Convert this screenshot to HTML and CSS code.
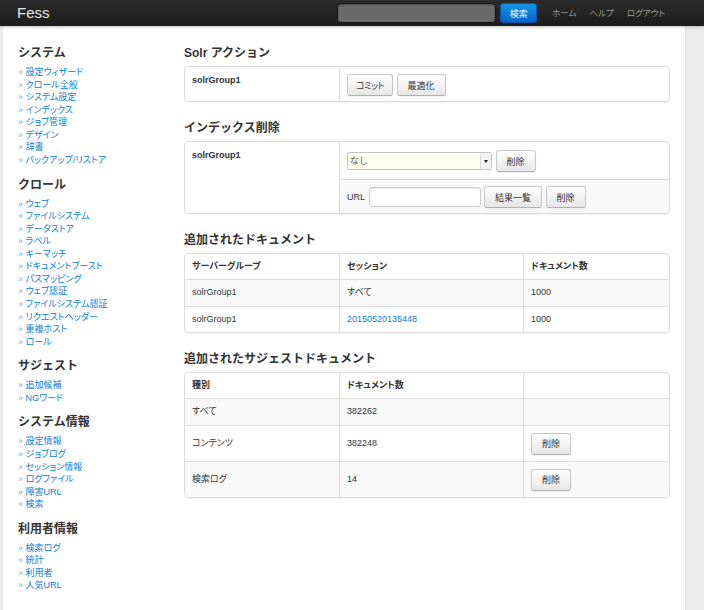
FILE: index.html
```html
<!DOCTYPE html>
<html lang="ja">
  <head>
    <meta charset="utf-8" />
    <title>Fess 管理</title>
    <link rel="stylesheet" href="styles.css">
  </head>
  <body>

    <div class="navbar">
      <a class="brand" href="#">Fess</a>
      <form class="nav-search">
        <input type="text" class="search-query">
        <button type="button" class="btn-search">検索</button>
      </form>
      <ul class="nav">
        <li><a href="#">ホーム</a></li>
        <li><a href="#">ヘルプ</a></li>
        <li><a href="#">ログアウト</a></li>
      </ul>
    </div>

    <div class="page">
      <div class="sidebar">
        <h3>システム</h3>
        <ul class="side-links">
          <li><a href="#">設定ウィザード</a></li>
          <li><a href="#">クロール全般</a></li>
          <li><a href="#">システム設定</a></li>
          <li><a href="#">インデックス</a></li>
          <li><a href="#">ジョブ管理</a></li>
          <li><a href="#">デザイン</a></li>
          <li><a href="#">辞書</a></li>
          <li><a href="#">バックアップ/リストア</a></li>
        </ul>

        <h3>クロール</h3>
        <ul class="side-links">
          <li><a href="#">ウェブ</a></li>
          <li><a href="#">ファイルシステム</a></li>
          <li><a href="#">データストア</a></li>
          <li><a href="#">ラベル</a></li>
          <li><a href="#">キーマッチ</a></li>
          <li><a href="#">ドキュメントブースト</a></li>
          <li><a href="#">パスマッピング</a></li>
          <li><a href="#">ウェブ認証</a></li>
          <li><a href="#">ファイルシステム認証</a></li>
          <li><a href="#">リクエストヘッダー</a></li>
          <li><a href="#">重複ホスト</a></li>
          <li><a href="#">ロール</a></li>
        </ul>

        <h3>サジェスト</h3>
        <ul class="side-links">
          <li><a href="#">追加候補</a></li>
          <li><a href="#">NGワード</a></li>
        </ul>

        <h3>システム情報</h3>
        <ul class="side-links">
          <li><a href="#">設定情報</a></li>
          <li><a href="#">ジョブログ</a></li>
          <li><a href="#">セッション情報</a></li>
          <li><a href="#">ログファイル</a></li>
          <li><a href="#">障害URL</a></li>
          <li><a href="#">検索</a></li>
        </ul>

        <h3>利用者情報</h3>
        <ul class="side-links">
          <li><a href="#">検索ログ</a></li>
          <li><a href="#">統計</a></li>
          <li><a href="#">利用者</a></li>
          <li><a href="#">人気URL</a></li>
        </ul>
      </div>

      <div class="main">
        <h3>Solr アクション</h3>
        <table class="box">
          <colgroup><col class="col-group"><col></colgroup>
          <tr>
            <th class="group-cell">solrGroup1</th>
            <td class="action-cell">
              <button type="button" class="btn btn-kana">コミット</button>
              <button type="button" class="btn">最適化</button>
            </td>
          </tr>
        </table>

        <h3>インデックス削除</h3>
        <table class="box">
          <colgroup><col class="col-group"><col></colgroup>
          <tr>
            <th class="group-cell" rowspan="2">solrGroup1</th>
            <td class="action-cell select-row">
              <span class="select-wrap">
                <select class="select">
                  <option>なし</option>
                </select>
              </span>
              <button type="button" class="btn">削除</button>
            </td>
          </tr>
          <tr>
            <td class="action-cell url-row">
              <label class="url-label">URL</label>
              <input type="text" class="url-input">
              <button type="button" class="btn">結果一覧</button>
              <button type="button" class="btn">削除</button>
            </td>
          </tr>
        </table>

        <h3>追加されたドキュメント</h3>
        <table class="box grid">
          <colgroup><col class="col-group"><col class="col-mid"><col></colgroup>
          <thead>
            <tr><th>サーバーグループ</th><th>セッション</th><th>ドキュメント数</th></tr>
          </thead>
          <tbody>
            <tr><td>solrGroup1</td><td>すべて</td><td>1000</td></tr>
            <tr><td>solrGroup1</td><td><a href="#">20150520135448</a></td><td>1000</td></tr>
          </tbody>
        </table>

        <h3>追加されたサジェストドキュメント</h3>
        <table class="box grid">
          <colgroup><col class="col-group"><col class="col-mid"><col></colgroup>
          <thead>
            <tr><th>種別</th><th>ドキュメント数</th><th></th></tr>
          </thead>
          <tbody>
            <tr><td>すべて</td><td>382262</td><td></td></tr>
            <tr class="btn-row"><td>コンテンツ</td><td>382248</td><td><button type="button" class="btn">削除</button></td></tr>
            <tr class="btn-row"><td>検索ログ</td><td>14</td><td><button type="button" class="btn">削除</button></td></tr>
          </tbody>
        </table>
      </div>
    </div>

  </body>
</html>
```

FILE: styles.css
```css
body {
  margin: 0;
  background: #ececec;
  font-family: "Liberation Sans", "Noto Sans CJK JP", sans-serif;
  font-size: 9px;
  line-height: 12.6px;
  color: #333;
  font-feature-settings: "palt";
}

a {
  color: #0b80d6;
  text-decoration: none;
}

h3 {
  margin: 0 0 5px;
  font-size: 12px;
  line-height: 16px;
  font-weight: bold;
  color: #333;
  font-feature-settings: normal;
}

/* top bar */

.navbar {
  position: relative;
  z-index: 1;
  height: 26px;
  display: flex;
  align-items: center;
  background: linear-gradient(#2c2c2c, #1c1c1c);
  box-shadow: 0 1px 3px rgba(0, 0, 0, 0.25);
}

.brand {
  margin-left: 17px;
  font-size: 15px;
  color: #e6e6e6;
}

.nav-search {
  margin: 0 0 0 auto;
  display: flex;
  gap: 4px;
}

.search-query {
  box-sizing: border-box;
  width: 159px;
  height: 20px;
  margin: 0;
  border: 1px solid #151515;
  border-radius: 4px;
  background: #6a6a6a;
  box-shadow: inset 0 1px 2px rgba(0, 0, 0, 0.3);
}

.btn-search {
  box-sizing: border-box;
  width: 37px;
  height: 20px;
  padding: 0;
  border: 1px solid #0a56b0;
  border-radius: 3px;
  background: linear-gradient(#1294e6, #0664c8);
  color: #fff;
  font-family: inherit;
  font-size: 9px;
}

.nav {
  display: flex;
  gap: 13px;
  list-style: none;
  margin: 0 39px 0 15px;
  padding: 0;
}

.nav a {
  color: #9a9a9a;
  font-size: 8.5px;
}

/* page */

.page {
  box-sizing: border-box;
  width: 683px;
  min-height: calc(100vh - 26px);
  margin-left: 3px;
  padding: 19px 15px 20px;
  display: flex;
  background: #fff;
  border-right: 1px solid #dcdcdc;
}

.sidebar {
  width: 166px;
  flex-shrink: 0;
}

.side-links {
  list-style: none;
  margin: 0 0 10px;
  padding: 0;
}

.side-links li {
  height: 12.57px;
  white-space: nowrap;
}

.side-links li::before {
  content: "» ";
  color: #7fa9d6;
}

.main {
  width: 487px;
}

/* boxes and tables */

.box {
  width: 100%;
  table-layout: fixed;
  border-collapse: separate;
  border-spacing: 0;
  border: 1px solid #dcdcdc;
  border-radius: 4px;
  margin-bottom: 18px;
  box-shadow: 0 1px 1px rgba(0, 0, 0, 0.05);
}

.col-group {
  width: 154px;
}

.col-mid {
  width: 184px;
}

.box th,
.box td {
  padding: 6px 7px 6.5px;
  line-height: 13px;
  text-align: left;
  font-size: 9px;
}

.box th {
  padding-bottom: 6px;
}

.group-cell {
  vertical-align: top;
  padding-top: 7px !important;
}

.action-cell {
  border-left: 1px solid #dcdcdc;
}

.box .action-cell {
  padding: 7px 7px 5px;
}

.box .select-row {
  padding: 8px 7px 7px;
}

.box .url-row {
  padding: 6px 7px 5px;
  background: #f9f9f9;
  border-top: 1px solid #dcdcdc;
  border-bottom-right-radius: 4px;
}

.grid th,
.grid td {
  vertical-align: middle;
}

.grid th + th,
.grid td + td {
  border-left: 1px solid #dcdcdc;
}

.grid tbody td {
  border-top: 1px solid #dcdcdc;
}

.grid tbody tr:nth-child(odd) td {
  background: #f9f9f9;
}

.grid tbody tr:last-child td:first-child {
  border-bottom-left-radius: 4px;
}

.grid tbody tr:last-child td:last-child {
  border-bottom-right-radius: 4px;
}

.grid .btn-row td {
  padding-top: 7px;
  padding-bottom: 6px;
}

/* controls */

.btn {
  box-sizing: border-box;
  height: 22px;
  margin: 0 1px 0 0;
  padding: 0 10px;
  vertical-align: middle;
  border: 1px solid #c8c8c8;
  border-bottom-color: #b0b0b0;
  border-radius: 3px;
  background: linear-gradient(#ffffff, #e6e6e6);
  box-shadow: 0 1px 2px rgba(0, 0, 0, 0.06);
  color: #333;
  font-family: inherit;
  font-size: 9px;
  font-feature-settings: "palt";
  cursor: pointer;
}

.btn-kana {
  padding: 0 8px;
  letter-spacing: -0.5px;
}

.select-wrap {
  position: relative;
  display: inline-block;
  vertical-align: middle;
  margin-right: 1px;
}

.select {
  box-sizing: border-box;
  width: 145px;
  height: 18px;
  margin: 0;
  padding: 0 2px;
  appearance: none;
  border: 1px solid #c4c4c4;
  border-radius: 2px;
  background: #ffffee;
  color: #555;
  font-family: inherit;
  font-size: 9px;
}

.select-wrap::after {
  content: "";
  position: absolute;
  right: 1px;
  top: 1px;
  width: 10px;
  height: 16px;
  border-left: 1px solid #ddd;
  background: #f2f2f2;
}

.select-wrap::before {
  content: "";
  position: absolute;
  z-index: 1;
  right: 4px;
  top: 8px;
  border-left: 2.5px solid transparent;
  border-right: 2.5px solid transparent;
  border-top: 3px solid #222;
}

.url-label {
  margin-right: 1px;
  vertical-align: middle;
  font-size: 9px;
}

.url-input {
  box-sizing: border-box;
  width: 112px;
  height: 20px;
  margin: 0 1px 0 0;
  vertical-align: middle;
  border: 1px solid #ccc;
  border-radius: 3px;
  box-shadow: inset 0 1px 1px rgba(0, 0, 0, 0.07);
}
```
